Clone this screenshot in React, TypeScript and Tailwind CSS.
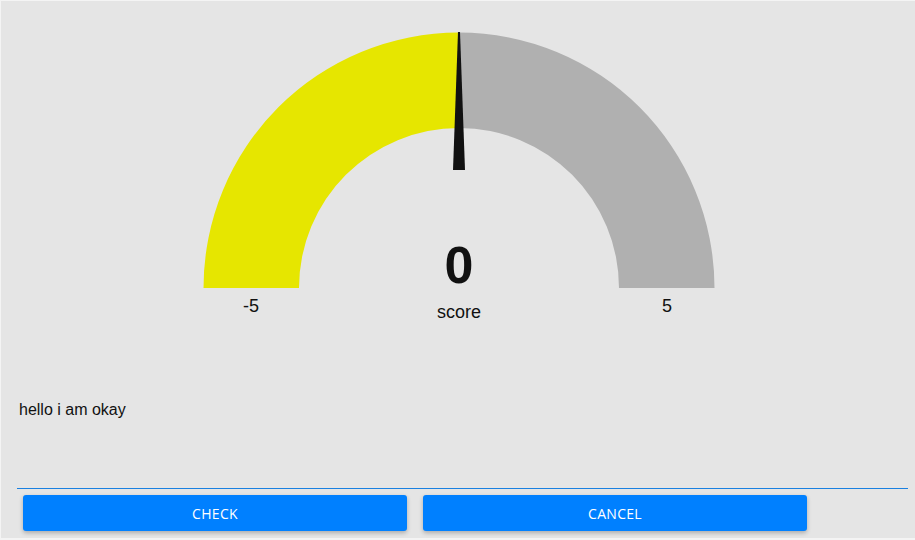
import React from "react";

function Gauge() {
  return (
    <div className="relative w-[512px]">
      <svg width="512" height="256" viewBox="0 0 512 256" className="block">
        <path
          d="M 0.5 256 A 255.5 255.5 0 0 1 256 0.5 L 256 96 A 160 160 0 0 0 96 256 Z"
          fill="#e6e600"
        />
        <path
          d="M 256 0.5 A 255.5 255.5 0 0 1 511.5 256 L 416 256 A 160 160 0 0 0 256 96 Z"
          fill="#b0b0b0"
        />
        <polygon points="255,0 257,0 262,138 250,138" fill="#111111" />
      </svg>
      <div className="absolute left-0 right-0 top-[207px] text-center text-[52px] leading-[52px] font-bold text-[#111]">
        0
      </div>
      <div className="absolute left-0 right-0 top-[270px] text-center text-[18px] leading-[21px] text-[#111]">
        score
      </div>
      <div className="flex justify-between mt-[8px] text-[18px] leading-[21px] text-[#111]">
        <div className="w-[96px] text-center">-5</div>
        <div className="w-[96px] text-center">5</div>
      </div>
    </div>
  );
}

export default function App() {
  return (
    <div
      className="w-[915px] h-[540px] bg-[#f4f4f4] pt-px pl-px pb-[2px]"
      style={{ fontFamily: '"Liberation Sans", Arial, sans-serif' }}
    >
      <div className="h-full bg-[#e5e5e5] flex flex-col">
        <div className="pt-[31px] flex justify-center pl-[2px]">
          <Gauge />
        </div>
        <div className="mt-[84px] pl-[18px] text-[16px] leading-[18px] text-[#111]">
          hello i am okay
        </div>
        <div className="mt-[69px] ml-[16px] mr-[7px] h-[1px] bg-[#1a80e0]" />
        <div className="flex gap-[16px] pl-[22px] mt-[6px]">
          <button
            className="w-[384px] h-[36px] rounded-[3px] bg-[#0080ff] text-white text-[14px] font-normal tracking-[0.3px] shadow-[0_2px_4px_rgba(0,0,0,0.25)]"
            style={{ fontFamily: '"Open Sans", sans-serif' }}
          >
            CHECK
          </button>
          <button
            className="w-[384px] h-[36px] rounded-[3px] bg-[#0080ff] text-white text-[14px] font-normal tracking-[0.3px] shadow-[0_2px_4px_rgba(0,0,0,0.25)]"
            style={{ fontFamily: '"Open Sans", sans-serif' }}
          >
            CANCEL
          </button>
        </div>
      </div>
    </div>
  );
}
